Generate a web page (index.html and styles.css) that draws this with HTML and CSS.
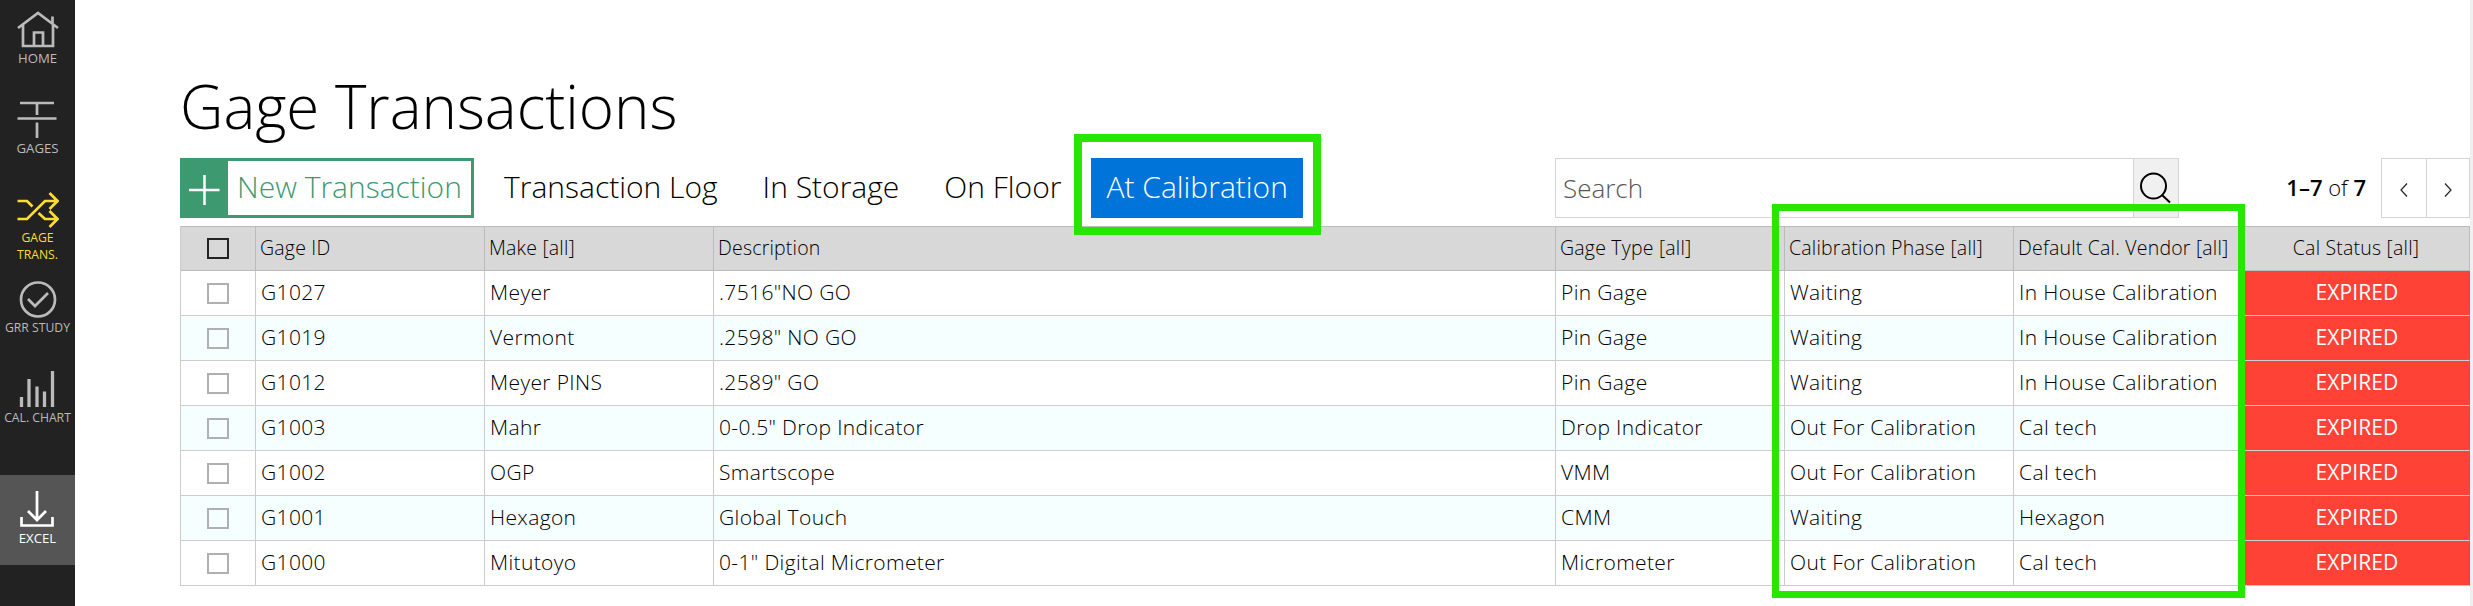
FILE: index.html
```
<!DOCTYPE html>
<html lang="en">

<head>
    <meta charset="UTF-8">
    <title>Gage Transactions</title>
    <link rel="stylesheet" href="styles.css">
</head>

<body>
    <nav class="sidebar">
        <a class="side-item">
            <svg class="side-icon" viewBox="0 0 42 38">
                <path d="M1 17 L21 2 L41 17 M6 14 V35 H36 V14 M35.500 13 V5.500 M17 35 V21.500 H26 V35" />
            </svg>
            <span>HOME</span>
        </a>
        <a class="side-item">
            <svg class="side-icon" viewBox="0 0 42 38">
                <path d="M3 2 H37 M20 2 V14 M0.500 17.500 H39.500 M20 21.500 V37" />
            </svg>
            <span>GAGES</span>
        </a>
        <a class="side-item small active">
            <svg class="side-icon" viewBox="0 0 42 38">
                <path d="M0.500 10 H10 L15.500 15.500 M0.500 28 H10 L28 10 H40 M21.500 22 L28 28 H40 M32.500 2 L40.500 10 L32.500 18 M32.500 20 L40.500 28 L32.500 36" />
            </svg>
            <span>GAGE<br>TRANS.</span>
        </a>
        <a class="side-item small">
            <svg class="side-icon" viewBox="0 0 42 38">
                <circle cx="21" cy="18.500" r="17" />
                <path d="M11 18 L18 25 L31 12" />
            </svg>
            <span>GRR STUDY</span>
        </a>
        <a class="side-item small">
            <svg class="side-icon bars" viewBox="0 0 42 38">
                <path d="M4.500 36 V26 M12 36 V8 M20 36 V15.500 M27.500 36 V20.500 M35.500 36 V0" />
            </svg>
            <span>CAL. CHART</span>
        </a>
        <a class="side-item export">
            <svg class="side-icon" viewBox="0 0 42 38">
                <path d="M20 0 V29 M11 20 L20 29 L29 20 M4.500 26 V34.500 H35.500 V26" />
            </svg>
            <span>EXCEL</span>
        </a>
    </nav>

    <main class="content">
        <h1>Gage Transactions</h1>

        <div class="toolbar">
            <button class="new-button">
                <svg class="plus" viewBox="0 0 48 60">
                    <path d="M9 32 H39.500 M24.500 17 V47" />
                </svg>
                <span class="new-label">New Transaction</span>
            </button>
            <div class="tabs">
                <a class="tab">Transaction Log</a>
                <a class="tab">In Storage</a>
                <a class="tab">On Floor</a>
                <a class="tab selected">At Calibration</a>
            </div>
            <div class="search">
                <input type="text" placeholder="Search">
                <button class="search-button">
                    <svg viewBox="0 0 44 58">
                        <circle cx="19.500" cy="27" r="12.500" />
                        <path d="M28 36 L36 43.500" />
                    </svg>
                </button>
            </div>
            <div class="pager">
                <span class="range"><b>1–7</b> of <b>7</b></span>
                <button class="page-button"><svg viewBox="0 0 8 14"><path d="M7 0.500 L1 7 L7 13.500" /></svg></button>
                <button class="page-button"><svg viewBox="0 0 8 14"><path d="M1 0.500 L7 7 L1 13.500" /></svg></button>
            </div>
        </div>

        <div class="table-wrap">
            <table>
                <colgroup>
                    <col class="col-check">
                    <col class="col-std">
                    <col class="col-std">
                    <col class="col-desc">
                    <col class="col-std">
                    <col class="col-std">
                    <col class="col-std">
                    <col class="col-status">
                </colgroup>
                <thead>
                    <tr>
                        <th><i class="box"></i></th>
                        <th>Gage ID</th>
                        <th>Make [all]</th>
                        <th>Description</th>
                        <th>Gage Type [all]</th>
                        <th>Calibration Phase [all]</th>
                        <th>Default Cal. Vendor [all]</th>
                        <th class="center">Cal Status [all]</th>
                    </tr>
                </thead>
                <tbody>
                    <tr>
                        <td><i class="box"></i></td>
                        <td>G1027</td>
                        <td>Meyer</td>
                        <td>.7516"NO GO</td>
                        <td>Pin Gage</td>
                        <td>Waiting</td>
                        <td>In House Calibration</td>
                        <td class="expired">EXPIRED</td>
                    </tr>
                    <tr>
                        <td><i class="box"></i></td>
                        <td>G1019</td>
                        <td>Vermont</td>
                        <td>.2598" NO GO</td>
                        <td>Pin Gage</td>
                        <td>Waiting</td>
                        <td>In House Calibration</td>
                        <td class="expired">EXPIRED</td>
                    </tr>
                    <tr>
                        <td><i class="box"></i></td>
                        <td>G1012</td>
                        <td>Meyer PINS</td>
                        <td>.2589" GO</td>
                        <td>Pin Gage</td>
                        <td>Waiting</td>
                        <td>In House Calibration</td>
                        <td class="expired">EXPIRED</td>
                    </tr>
                    <tr>
                        <td><i class="box"></i></td>
                        <td>G1003</td>
                        <td>Mahr</td>
                        <td>0-0.5" Drop Indicator</td>
                        <td>Drop Indicator</td>
                        <td>Out For Calibration</td>
                        <td>Cal tech</td>
                        <td class="expired">EXPIRED</td>
                    </tr>
                    <tr>
                        <td><i class="box"></i></td>
                        <td>G1002</td>
                        <td>OGP</td>
                        <td>Smartscope</td>
                        <td>VMM</td>
                        <td>Out For Calibration</td>
                        <td>Cal tech</td>
                        <td class="expired">EXPIRED</td>
                    </tr>
                    <tr>
                        <td><i class="box"></i></td>
                        <td>G1001</td>
                        <td>Hexagon</td>
                        <td>Global Touch</td>
                        <td>CMM</td>
                        <td>Waiting</td>
                        <td>Hexagon</td>
                        <td class="expired">EXPIRED</td>
                    </tr>
                    <tr>
                        <td><i class="box"></i></td>
                        <td>G1000</td>
                        <td>Mitutoyo</td>
                        <td>0-1" Digital Micrometer</td>
                        <td>Micrometer</td>
                        <td>Out For Calibration</td>
                        <td>Cal tech</td>
                        <td class="expired">EXPIRED</td>
                    </tr>
                </tbody>
            </table>
            <div class="highlight"></div>
        </div>
    </main>
    <div class="scroll-track"></div>
</body>

</html>
```

FILE: styles.css
```
:root {
    --green: #3d9970;
    --blue: #0074d9;
    --red: #ff4136;
    --marker: #27e600;
}

* {
    box-sizing: border-box;
}

body {
    margin: 0;
    display: flex;
    height: 606px;
    overflow: hidden;
    background: #fff;
    color: #000;
    font-family: 'Open Sans', sans-serif;
    font-weight: 300;
}

button,
input {
    font: inherit;
    margin: 0;
    padding: 0;
    border-radius: 0;
    outline: none;
}

svg {
    fill: none;
    stroke: currentColor;
}

/* sidebar */
.sidebar {
    width: 75px;
    flex: none;
    background: #222;
}

.side-item {
    display: flex;
    flex-direction: column;
    align-items: center;
    height: 90px;
    padding-top: 11px;
    color: #bbb;
    font-size: 13.2px;
    font-weight: 400;
    line-height: 17px;
    text-align: center;
    white-space: nowrap;
}

.side-icon {
    flex: none;
    width: 42px;
    height: 38px;
    margin-bottom: 1px;
    stroke-width: 2.7;
}

.side-item.small {
    font-size: 12.2px;
}

.side-item.small .side-icon {
    margin-bottom: 0;
}

.side-icon.bars {
    stroke-width: 3.3;
}

.side-item.active {
    color: #ffdc30;
}

.side-item.export {
    margin-top: 25px;
    padding-top: 16px;
    background: #555;
    color: #fff;
}

/* page */
.content {
    flex: none;
    width: 2395px;
    padding-left: 105px;
}

h1 {
    margin: 0;
    height: 158px;
    padding-top: 65px;
    font-size: 60px;
    font-weight: 300;
    line-height: 82px;
}

.toolbar {
    display: flex;
    height: 60px;
    font-size: 30px;
    line-height: 58px;
    white-space: nowrap;
}

.new-button {
    display: flex;
    width: 294px;
    border: none;
    background: var(--green);
    color: #fff;
}

.plus {
    width: 48px;
    height: 60px;
    stroke-width: 2.5;
}

.new-label {
    flex: 1;
    height: 54px;
    margin: 3px 3px 3px 0;
    background: #fff;
    color: var(--green);
    line-height: 52px;
}

.tabs {
    display: flex;
    margin-left: 15px;
}

.tab {
    padding: 0 15px;
    margin-right: 15px;
}

.tab.selected {
    position: relative;
    width: 212px;
    margin-right: 0;
    background: var(--blue);
    color: #fff;
}

.tab.selected::after {
    content: "";
    position: absolute;
    inset: -24px -18px -17px -17px;
    border: 8px solid var(--marker);
    z-index: 1;
}

.search {
    display: flex;
    width: 624px;
    margin-left: auto;
    border: 1px solid #d5d5d5;
}

.search input {
    flex: 1;
    padding-left: 7px;
    border: none;
    font-size: 26px;
}

.search input::placeholder {
    color: #555;
}

.search-button {
    width: 45px;
    border: none;
    border-left: 1px solid #d5d5d5;
    background: #f0f0f0;
    color: #000;
}

.search-button svg {
    display: block;
    width: 44px;
    height: 58px;
    stroke-width: 2;
}

.pager {
    display: flex;
    width: 291px;
    justify-content: flex-end;
    font-size: 22px;
}

.range {
    margin-right: 15px;
}

.range b {
    font-weight: 600;
}

.page-button {
    width: 46px;
    border: 1px solid #d5d5d5;
    background: #fff;
    color: #222;
}

.page-button + .page-button {
    border-left: none;
    width: 43px;
}

.page-button svg {
    width: 8px;
    height: 14px;
    stroke-width: 1.2;
}

/* table */
.table-wrap {
    position: relative;
    margin-top: 8px;
}

table {
    width: 2290px;
    table-layout: fixed;
    border-collapse: separate;
    border-spacing: 0;
    border-left: 1px solid #ccc;
    white-space: nowrap;
}

.col-check {
    width: 75px;
}

.col-std {
    width: 229px;
}

.col-desc {
    width: 842px;
}

th,
td {
    height: 45px;
    padding: 0 0 2px 5px;
    border-right: 1px solid #ccc;
    border-bottom: 1px solid #ccc;
    font-size: 21px;
    font-weight: 300;
    letter-spacing: 0.36px;
    line-height: 42px;
    text-align: left;
}

th {
    padding: 0 0 1px 4px;
    border-color: #bbb;
    border-top: 1px solid #bbb;
    background: #d8d8d8;
    font-size: 19.5px;
    letter-spacing: 0.2px;
}

td:first-child,
th:first-child {
    padding: 0;
}

tbody tr:nth-child(even) {
    background: #f5ffff;
}

.box {
    display: block;
    width: 22px;
    height: 21px;
    margin: 0 auto;
    border: 2px solid #b0b0b0;
}

th .box {
    border-color: #222;
}

.center {
    padding-left: 0;
    text-align: center;
}

.expired {
    padding-left: 2px;
    border-right-color: var(--red);
    background: var(--red);
    color: #fff;
    font-weight: 400;
    letter-spacing: 0.1px;
    text-align: center;
}

.highlight {
    position: absolute;
    left: 1592px;
    top: -22px;
    width: 473px;
    height: 394px;
    border: 7px solid var(--marker);
}

.scroll-track {
    flex: 1;
    background: #f0f0f0;
}
```
